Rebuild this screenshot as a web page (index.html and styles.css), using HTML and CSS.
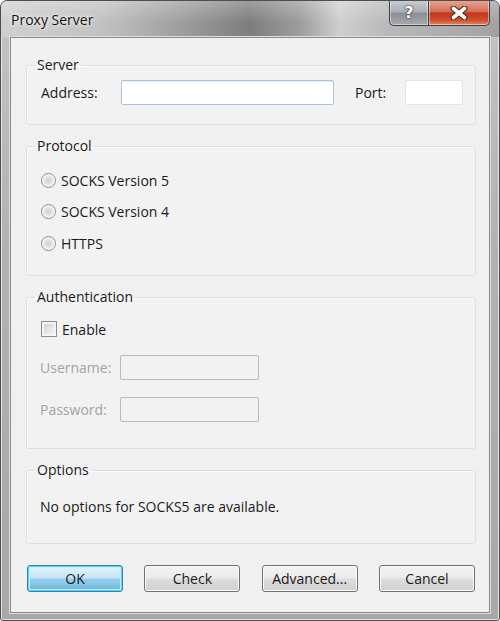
FILE: index.html
```html
<!DOCTYPE html>
<html>
<head>
<meta charset="utf-8">
<link rel="stylesheet" href="styles.css">
</head>
<body>
<div class="window">
  <div class="titlebar">
    <span class="title">Proxy Server</span>
    <div class="caption">
      <div class="cap help">?</div>
      <div class="cap close">
        <svg width="20" height="14" viewBox="0 0 20 14">
          <path d="M4.5 2.5 L15.5 11.5 M15.5 2.5 L4.5 11.5" stroke="#5a2a1e" stroke-width="6" stroke-linecap="round"/>
          <path d="M4.5 2.5 L15.5 11.5 M15.5 2.5 L4.5 11.5" stroke="#ffffff" stroke-width="3.6" stroke-linecap="round"/>
        </svg>
      </div>
    </div>
  </div>
  <div class="client">
    <fieldset class="group server">
      <legend>Server</legend>
      <div class="row">
        <span class="lbl addr-lbl">Address:</span>
        <div class="input addr"></div>
        <span class="lbl port-lbl">Port:</span>
        <div class="input port"></div>
      </div>
    </fieldset>
    <fieldset class="group protocol">
      <legend>Protocol</legend>
      <div class="choice"><span class="radio"></span><span>SOCKS Version 5</span></div>
      <div class="choice"><span class="radio"></span><span>SOCKS Version 4</span></div>
      <div class="choice"><span class="radio"></span><span>HTTPS</span></div>
    </fieldset>
    <fieldset class="group auth">
      <legend>Authentication</legend>
      <div class="choice"><span class="check"></span><span>Enable</span></div>
      <div class="row cred user">
        <span class="lbl dis">Username:</span>
        <div class="input disabled"></div>
      </div>
      <div class="row cred pass">
        <span class="lbl dis">Password:</span>
        <div class="input disabled"></div>
      </div>
    </fieldset>
    <fieldset class="group options">
      <legend>Options</legend>
      <div class="note">No options for SOCKS5 are available.</div>
    </fieldset>
    <div class="buttons">
      <div class="btn default">OK</div>
      <div class="btn">Check</div>
      <div class="btn">Advanced...</div>
      <div class="btn">Cancel</div>
    </div>
  </div>
</div>
</body>
</html>
```
FILE: styles.css
```css
html, body {
  margin: 0;
  padding: 0;
  background: #ffffff;
}
body {
  font-family: "Open Sans", "Noto Sans", sans-serif;
  font-size: 14px;
  color: #1a1a1a;
}
.window {
  width: 500px;
  height: 621px;
  box-sizing: border-box;
  display: flex;
  flex-direction: column;
  border: 1px solid #4e4e4e;
  border-radius: 7px 7px 3px 3px;
  background: linear-gradient(180deg, #c4c4c4 0%, #b2b2b2 40%, #a8a8a8 100%);
  box-shadow: inset 0 0 0 1px #e4e4e4;
  overflow: hidden;
}
.titlebar {
  height: 36px;
  flex: none;
  display: flex;
  justify-content: space-between;
  align-items: flex-start;
  background:
    linear-gradient(180deg, rgba(255,255,255,0.25) 0%, rgba(255,255,255,0) 60%),
    linear-gradient(90deg, #d0d0d0 0%, #c2c2c2 20%, #9a9a9a 38%, #7d7d7d 50%, #9d9d9d 60%, #cfcfcf 68%, #b8b8b8 78%, #a2a2a2 100%);
  border-radius: 6px 6px 0 0;
}
.title {
  margin: 9px 0 0 10px;
  font-size: 14px;
  line-height: 20px;
  color: #111;
  text-shadow: 0 0 6px rgba(255,255,255,0.9), 0 0 3px rgba(255,255,255,0.9);
}
.caption {
  display: flex;
  margin-right: 9px;
  margin-top: -1px;
}
.cap {
  height: 26px;
  box-sizing: border-box;
  border: 1px solid #3f3f3f;
  border-top: none;
  display: flex;
  align-items: center;
  justify-content: center;
  box-shadow: inset 0 0 0 1px rgba(255,255,255,0.45);
}
.help {
  width: 39px;
  border-right: none;
  border-radius: 0 0 0 5px;
  background: linear-gradient(180deg, #c9ccd0 0%, #a9adb2 48%, #8a8f95 52%, #a5a9ae 100%);
  color: #ffffff;
  font-family: "DejaVu Sans", sans-serif;
  font-weight: bold;
  font-size: 16px;
  text-shadow: 0 0 2px #2a2a2a, 0 0 1px #2a2a2a;
}
.close {
  width: 62px;
  border-radius: 0 0 5px 0;
  background: linear-gradient(180deg, #e7a793 0%, #d7705a 45%, #c4361c 52%, #cf4d2e 80%, #e28a5e 100%);
}
.client {
  flex: 1;
  margin: 0 9px 7px 9px;
  background: #f0f0f0;
  border: 1px solid #8b8b8b;
  box-shadow: 0 0 0 1px #dedede;
  padding: 17px 13px 18px 15px;
  display: flex;
  flex-direction: column;
}
.group {
  margin: 0;
  border: 1px solid #dcdfe2;
  border-radius: 3px;
  box-shadow: inset 1px 1px 0 #fbfbfb;
  background: #f2f2f2;
  padding: 0 12px 0 14px;
  min-width: 0;
}
.group legend {
  margin-left: -6px;
  padding: 0 2px 0 2px;
  line-height: 20px;
  font-size: 14px;
  color: #1a1a1a;
}
.server {
  padding-top: 5px;
  padding-bottom: 19px;
}
.protocol {
  margin-top: 11px;
  padding-top: 12px;
  padding-bottom: 20px;
}
.auth {
  margin-top: 11px;
  padding-top: 10px;
  padding-bottom: 26px;
}
.options {
  margin-top: 11px;
  padding-top: 17px;
  padding-bottom: 26px;
}
.row {
  display: flex;
  align-items: center;
  height: 25px;
}
.lbl {
  flex: none;
}
.addr-lbl {
  width: 80px;
}
.port-lbl {
  width: 50px;
  margin-left: 21px;
}
.input {
  height: 25px;
  box-sizing: border-box;
  background: #ffffff;
  border: 1px solid #dcdcdc;
  border-radius: 2px;
}
.addr {
  width: 213px;
  border-color: #a7c3dc;
  box-shadow: inset 0 1px 0 #e6eef6;
}
.port {
  width: 58px;
  border-color: #e4e4e4;
}
.choice {
  display: flex;
  align-items: center;
  height: 24px;
  gap: 5px;
}
.protocol .choice + .choice {
  margin-top: 7.5px;
}
.radio {
  width: 15px;
  height: 15px;
  box-sizing: border-box;
  border-radius: 50%;
  border: 1px solid #8a8c8e;
  background: radial-gradient(circle at 50% 50%, #cfcfcf 0, #dedede 3px, #eeeeee 5px, #fbfbfb 6.5px);
  flex: none;
}
.check {
  width: 16px;
  height: 16px;
  box-sizing: border-box;
  border: 1px solid #8a8c8e;
  background: linear-gradient(135deg, #cbcbcb 0%, #e6e6e6 55%, #f7f7f7 100%);
  box-shadow: inset 0 0 0 2px #f4f4f4;
  flex: none;
}
.cred .lbl {
  width: 80px;
  margin-left: -1px;
}
.user {
  margin-top: 14px;
}
.pass {
  margin-top: 17px;
}
.dis {
  color: #a3a3a3;
}
.disabled {
  width: 139px;
  background: #f2f2f2;
  border-color: #b9b9b9;
}
.note {
  line-height: 20px;
  margin-left: -1px;
}
.buttons {
  display: flex;
  justify-content: space-between;
  margin: 21px 1px 0 1px;
}
.btn {
  width: 96px;
  height: 27px;
  box-sizing: border-box;
  border: 1px solid #707070;
  border-radius: 3px;
  display: flex;
  align-items: center;
  justify-content: center;
  background: linear-gradient(180deg, #f2f2f2 0%, #ebebeb 48%, #dddddd 52%, #cfcfcf 100%);
  box-shadow: inset 0 0 0 1px #fbfbfb;
  color: #1a1a1a;
}
.btn.default {
  border-color: #3c7fb1;
  background: linear-gradient(180deg, #e5f4fc 0%, #c4e5f6 48%, #98d1ef 52%, #68b3db 100%);
  box-shadow: inset 0 0 0 1px #48d7fb, inset 0 0 0 2px #c7effd;
}
```
